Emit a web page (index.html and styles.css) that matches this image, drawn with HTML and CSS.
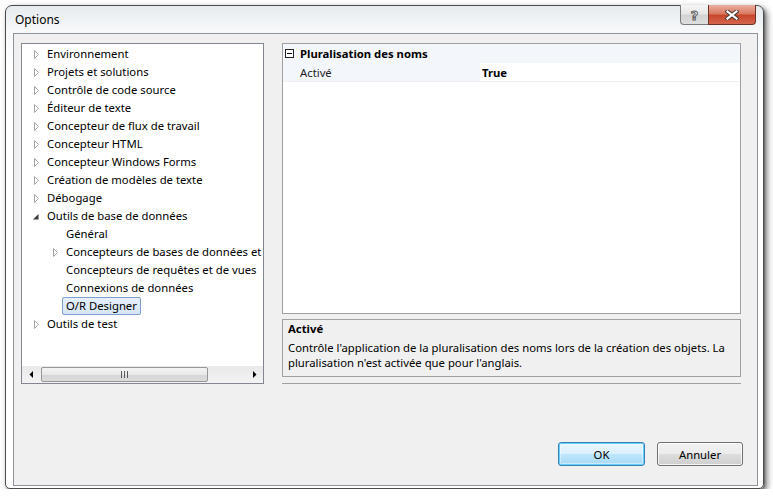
FILE: index.html
```html
<!DOCTYPE html>
<html lang="fr">
<head>
<meta charset="utf-8">
<title>Options</title>
<link rel="stylesheet" href="styles.css">
</head>
<body>
<div class="window">
  <div class="titlebar">
    <span class="title">Options</span>
    <div class="caption-btns">
      <div class="cbtn help">?</div>
      <div class="cbtn close">
        <svg width="14" height="10" viewBox="0 0 14 10">
          <path d="M2.5 1.5 L11.5 8.5 M11.5 1.5 L2.5 8.5" stroke="#4a3a36" stroke-width="4.2" stroke-linecap="square"/>
          <path d="M2.5 1.5 L11.5 8.5 M11.5 1.5 L2.5 8.5" stroke="#ffffff" stroke-width="2.2" stroke-linecap="square"/>
        </svg>
      </div>
    </div>
  </div>
  <div class="client">
    <div class="main">
      <div class="tree">
        <div class="tree-list">
          <div class="row lvl1"><span class="tw"><svg class="col" width="6" height="9" viewBox="0 0 6 9"><polygon points="0.5,0.5 4.5,4.5 0.5,8.5" fill="#fff" stroke="#a6a6a6"/></svg></span><span class="lbl">Environnement</span></div>
          <div class="row lvl1"><span class="tw"><svg class="col" width="6" height="9" viewBox="0 0 6 9"><polygon points="0.5,0.5 4.5,4.5 0.5,8.5" fill="#fff" stroke="#a6a6a6"/></svg></span><span class="lbl">Projets et solutions</span></div>
          <div class="row lvl1"><span class="tw"><svg class="col" width="6" height="9" viewBox="0 0 6 9"><polygon points="0.5,0.5 4.5,4.5 0.5,8.5" fill="#fff" stroke="#a6a6a6"/></svg></span><span class="lbl">Contrôle de code source</span></div>
          <div class="row lvl1"><span class="tw"><svg class="col" width="6" height="9" viewBox="0 0 6 9"><polygon points="0.5,0.5 4.5,4.5 0.5,8.5" fill="#fff" stroke="#a6a6a6"/></svg></span><span class="lbl">Éditeur de texte</span></div>
          <div class="row lvl1"><span class="tw"><svg class="col" width="6" height="9" viewBox="0 0 6 9"><polygon points="0.5,0.5 4.5,4.5 0.5,8.5" fill="#fff" stroke="#a6a6a6"/></svg></span><span class="lbl">Concepteur de flux de travail</span></div>
          <div class="row lvl1"><span class="tw"><svg class="col" width="6" height="9" viewBox="0 0 6 9"><polygon points="0.5,0.5 4.5,4.5 0.5,8.5" fill="#fff" stroke="#a6a6a6"/></svg></span><span class="lbl">Concepteur HTML</span></div>
          <div class="row lvl1"><span class="tw"><svg class="col" width="6" height="9" viewBox="0 0 6 9"><polygon points="0.5,0.5 4.5,4.5 0.5,8.5" fill="#fff" stroke="#a6a6a6"/></svg></span><span class="lbl">Concepteur Windows Forms</span></div>
          <div class="row lvl1"><span class="tw"><svg class="col" width="6" height="9" viewBox="0 0 6 9"><polygon points="0.5,0.5 4.5,4.5 0.5,8.5" fill="#fff" stroke="#a6a6a6"/></svg></span><span class="lbl">Création de modèles de texte</span></div>
          <div class="row lvl1"><span class="tw"><svg class="col" width="6" height="9" viewBox="0 0 6 9"><polygon points="0.5,0.5 4.5,4.5 0.5,8.5" fill="#fff" stroke="#a6a6a6"/></svg></span><span class="lbl">Débogage</span></div>
          <div class="row lvl1"><span class="tw"><svg class="exp" width="6" height="6" viewBox="0 0 6 6"><polygon points="5.5,0 5.5,5.5 0,5.5" fill="#3c3c3c"/></svg></span><span class="lbl">Outils de base de données</span></div>
          <div class="row lvl2"><span class="tw"></span><span class="lbl">Général</span></div>
          <div class="row lvl2"><span class="tw"><svg class="col" width="6" height="9" viewBox="0 0 6 9"><polygon points="0.5,0.5 4.5,4.5 0.5,8.5" fill="#fff" stroke="#a6a6a6"/></svg></span><span class="lbl">Concepteurs de bases de données et</span></div>
          <div class="row lvl2"><span class="tw"></span><span class="lbl">Concepteurs de requêtes et de vues</span></div>
          <div class="row lvl2"><span class="tw"></span><span class="lbl">Connexions de données</span></div>
          <div class="row lvl2"><span class="tw"></span><span class="lbl selected">O/R Designer</span></div>
          <div class="row lvl1"><span class="tw"><svg class="col" width="6" height="9" viewBox="0 0 6 9"><polygon points="0.5,0.5 4.5,4.5 0.5,8.5" fill="#fff" stroke="#a6a6a6"/></svg></span><span class="lbl">Outils de test</span></div>
        </div>
        <div class="hscroll">
          <div class="sarrow"><svg width="4" height="7" viewBox="0 0 4 7"><polygon points="4,0 4,7 0.5,3.5" fill="#000"/></svg></div>
          <div class="strack">
            <div class="thumb">
              <svg width="7" height="7" viewBox="0 0 7 7"><path d="M0.5 0 V7 M3.5 0 V7 M6.5 0 V7" stroke="#5a5a5a" stroke-width="1"/></svg>
            </div>
          </div>
          <div class="sarrow"><svg width="4" height="7" viewBox="0 0 4 7"><polygon points="0,0 0,7 3.5,3.5" fill="#000"/></svg></div>
        </div>
      </div>
      <div class="right">
        <div class="grid">
          <div class="cat">
            <span class="minus"></span>
            <span class="cat-name">Pluralisation des noms</span>
          </div>
          <div class="prop">
            <span class="pname">Activé</span>
            <span class="pval">True</span>
          </div>
        </div>
        <div class="desc">
          <div class="desc-title">Activé</div>
          <div class="desc-text">Contrôle l'application de la pluralisation des noms lors de la création des objets. La pluralisation n'est activée que pour l'anglais.</div>
        </div>
        <div class="sep"></div>
      </div>
    </div>
    <div class="buttons">
      <div class="btn default">OK</div>
      <div class="btn">Annuler</div>
    </div>
  </div>
</div>
</body>
</html>
```

FILE: styles.css
```css
* { box-sizing: border-box; }

html, body {
  margin: 0;
  padding: 0;
  background: #ffffff;
}

body {
  font-family: "Noto Sans", "Open Sans", sans-serif;
  font-size: 11.3px;
  color: #000;
  padding: 5px 0 0 5px;
}

.window {
  width: 759px;
  height: 484px;
  border: 1px solid #4d4d4d;
  border-radius: 7px 7px 5px 5px;
  background: linear-gradient(#e7ebef, #f7f9fa 26px, #ffffff 60px);
  box-shadow: 3px 3px 6px rgba(0, 0, 0, 0.55), 1px 1px 2px rgba(0,0,0,0.3);
  display: flex;
  flex-direction: column;
}

.titlebar {
  height: 27px;
  display: flex;
  align-items: flex-start;
  justify-content: space-between;
}

.title {
  margin: 6px 0 0 9px;
  font-size: 12px;
  line-height: 16px;
  color: #000;
}

.caption-btns {
  display: flex;
  margin: -1px 7px 0 0;
}

.cbtn {
  height: 20px;
  display: flex;
  align-items: center;
  justify-content: center;
}

.help {
  width: 28px;
  border: 1px solid #7b7b7b;
  border-top: none;
  border-right: none;
  border-radius: 0 0 0 4px;
  background: linear-gradient(#f6f6f6, #e7e7e7 45%, #d3d3d3 55%, #dedede);
  font-family: "DejaVu Sans", sans-serif;
  font-weight: bold;
  font-size: 13px;
  color: #f2f2f2;
  -webkit-text-stroke: 1px #5a5a5a;
  padding-top: 1px;
}

.close {
  width: 48px;
  border: 1px solid #6b3328;
  border-top: none;
  border-radius: 0 0 4px 0;
  background: linear-gradient(#eab0a2, #da7a63 45%, #c8472c 55%, #d3664d);
}

.client {
  margin-left: 7px;
  width: 745px;
  height: 453px;
  border: 1px solid #8e939b;
  background: #f0f0f0;
  display: flex;
  flex-direction: column;
}

.main {
  display: flex;
  gap: 18px;
  padding: 9px 16px 0 7px;
}

.tree {
  width: 243px;
  height: 341px;
  border: 1px solid #828790;
  background: #fff;
  display: flex;
  flex-direction: column;
}

.tree-list {
  flex: 1;
  padding-top: 1px;
  overflow: hidden;
}

.row {
  height: 18px;
  display: flex;
  align-items: center;
  white-space: nowrap;
}

.lvl1 { padding-left: 12px; }
.lvl2 { padding-left: 31px; }

.tw {
  width: 13px;
  flex: none;
  display: flex;
  align-items: center;
}

.tw .col { margin-left: 0; }
.tw .exp { margin-left: -1px; margin-top: 1px; }

.lbl {
  line-height: 16px;
  padding: 0 3px 0 0;
  border: 1px solid transparent;
  margin-left: -1px;
}

.lbl.selected {
  padding: 0 3px;
  margin-left: -4px;
  border: 1px solid #7da2ce;
  border-radius: 2px;
  background: linear-gradient(#e6effa, #d6e5f6);
}

.hscroll {
  height: 17px;
  display: flex;
  align-items: center;
  background: linear-gradient(#e9e9e9, #f3f3f3);
}

.sarrow {
  width: 17px;
  height: 17px;
  flex: none;
  display: flex;
  align-items: center;
  justify-content: center;
}

.strack {
  flex: 1;
  height: 17px;
  padding: 1px 0;
}

.thumb {
  width: 167px;
  height: 15px;
  margin-left: 2px;
  border: 1px solid #979797;
  border-radius: 2px;
  background: linear-gradient(#f4f4f4, #e8e8e8 50%, #d6d6d6 51%, #dcdcdc);
  display: flex;
  align-items: center;
  justify-content: center;
}

.right {
  width: 460px;
  display: flex;
  flex-direction: column;
}

.grid {
  height: 271px;
  border: 1px solid #a0a0a0;
  background: #fff;
}

.cat {
  height: 19px;
  display: flex;
  align-items: center;
  background: #f3f6fb;
}

.minus {
  width: 9px;
  height: 9px;
  margin: 0 6px 0 2px;
  border: 1px solid #222;
  background: #fff;
  position: relative;
}

.minus::after {
  content: "";
  position: absolute;
  left: 1px;
  right: 1px;
  top: 3px;
  height: 1px;
  background: #000;
}

.cat-name {
  font-weight: bold;
}

.prop {
  height: 19px;
  display: flex;
  align-items: center;
  border-bottom: 1px solid #eef0f4;
}

.pname {
  width: 197px;
  height: 100%;
  display: flex;
  align-items: center;
  padding-left: 17px;
  background: #f3f6fb;
  color: #1e1e1e;
}

.pval {
  height: 100%;
  display: flex;
  align-items: center;
  padding-left: 2px;
  font-weight: bold;
}

.desc {
  margin-top: 5px;
  height: 58px;
  border: 1px solid #a0a0a0;
  background: #f0f0f0;
  padding: 1px 5px 0 5px;
  line-height: 15px;
}

.desc-title {
  font-weight: bold;
}

.desc-text {
  margin-top: 4px;
  padding-right: 8px;
}

.sep {
  margin-top: 6px;
  border-top: 1px solid #a0a0a0;
}

.buttons {
  margin-top: auto;
  display: flex;
  justify-content: flex-end;
  gap: 12px;
  padding: 0 14px 19px 0;
}

.btn {
  width: 86px;
  height: 24px;
  border: 1px solid #707070;
  border-radius: 3px;
  background: linear-gradient(#f2f2f2, #ebebeb 50%, #dddddd 51%, #cfcfcf);
  box-shadow: inset 0 0 0 1px rgba(255,255,255,0.8);
  display: flex;
  align-items: center;
  justify-content: center;
  font-size: 11.3px;
}

.btn.default {
  width: 87px;
  border-color: #3c7fb1;
  background: linear-gradient(#eaf6fd, #d9f0fc 50%, #bee6fd 51%, #a7d9f5);
  box-shadow: inset 0 0 0 1px #62d0fa, inset 0 0 0 2px rgba(255,255,255,0.4);
}
```
